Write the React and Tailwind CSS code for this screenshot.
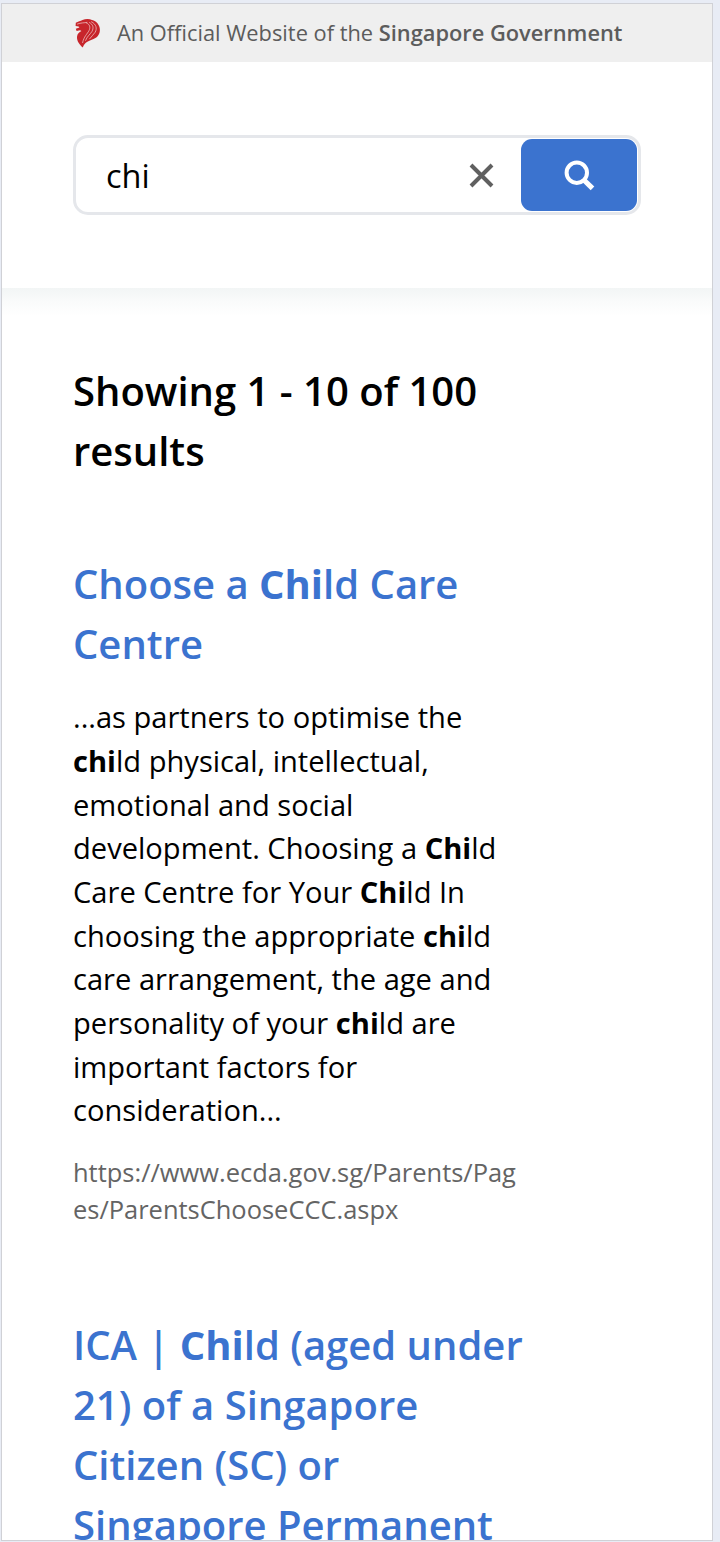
import React from "react";

function Lion() {
  return (
    <svg className="h-[30px] w-[26px] shrink-0" viewBox="0 0 26 30" aria-hidden="true">
      <path
        fill="#c7252b"
        d="M.8 4.8 C3 3.4 5.5 3 7.5 2 C10.5 .6 14.5 .6 17 2 C21.5 3.2 24.9 7 24.9 11.8 C24.9 16 22.8 19.4 18.5 21 C13.5 22.8 9.6 24.6 7.8 29.4 C4.6 27 1.8 23 2 19 C2.2 15.8 4.2 14 6.4 13 L5.1 12.2 L1.6 12.9 L.8 10.8 L4.4 9.4 L3.6 8.6 L.6 8 Z"
      />
      <g fill="none" stroke="#edc4c4" strokeWidth=".75" strokeLinecap="round">
        <path d="M2.5 6 C6 4.6 9 5 12 4.4" />
        <path d="M11.5 5 C15 6.4 15.6 9.4 14 12.6 C12.4 15.8 8.8 18.6 7.6 24.6" />
        <path d="M14.5 4.6 C18.4 6.6 18.8 10 17 13.4 C15 16.6 12 18.4 10.6 22.4" />
        <path d="M16.5 3.8 C21.4 6.2 22.2 10.6 20.2 14.2 C18.6 17 16 18.4 14.6 20.8" />
      </g>
    </svg>
  );
}

function Lines({ items }) {
  return items.map((line, i) => (
    <span key={i} className="block whitespace-nowrap">
      {line}
    </span>
  ));
}

const B = ({ children }) => <b className="font-bold">{children}</b>;

export default function App() {
  return (
    <div className="h-[1542px] w-[720px] overflow-hidden bg-[#e8ecf5] pl-px pt-[3px] font-['Open_Sans',sans-serif]">
      <main className="flex h-[1538px] w-[712px] flex-col overflow-hidden border border-[#d0d1d6] bg-white">
        <div className="flex h-[58px] shrink-0 items-center bg-[#efefef] pl-[73px] text-[#5c5c5c]">
          <Lion />
          <p className="ml-4 whitespace-nowrap text-[21.82px] leading-[32px]">
            An Official Website of the <b className="font-semibold">Singapore Government</b>
          </p>
        </div>

        <header className="flex h-[226px] shrink-0 items-start pl-[71px] pt-[73px]">
          <form className="flex h-20 w-[568px] rounded-[15px] border-[3px] border-[#e5e7eb] bg-white p-[0.6px]">
            <div className="flex flex-1 items-center justify-between pl-[29.4px] pr-[27.5px]">
              <span className="pt-0.5 text-[32.5px] text-black">chi</span>
              <svg className="size-[25px]" viewBox="0 0 25 25" fill="none" stroke="#606060" strokeWidth="4">
                <path d="M2 2 L23 23 M23 2 L2 23" />
              </svg>
            </div>
            <button type="button" aria-label="Search" className="flex w-[116.4px] items-center justify-center rounded-[11px] bg-[#3b73cf]">
              <svg className="h-[31px] w-[31px]" viewBox="0 0 31 31" fill="none" stroke="white">
                <circle cx="12.8" cy="12.7" r="10.2" strokeWidth="4" />
                <path d="M19.9 20 L28.5 28.3" strokeWidth="5.2" />
              </svg>
            </button>
          </form>
        </header>

        <section className="flex-1 bg-[linear-gradient(to_bottom,#f2f5f5_0px,#fafbfb_14px,#ffffff_28px)] pl-[71px] pt-[73px]">
          <h1 className="text-[40px] font-semibold leading-[60px] text-black">
            <Lines items={["Showing 1 - 10 of 100", "results"]} />
          </h1>

          <article className="mt-[73px]">
            <h2 className="text-[40px] font-semibold leading-[60px] text-[#3b73cf]">
              <Lines items={[<>Choose a <B>Chi</B>ld Care</>, "Centre"]} />
            </h2>
            <p className="mt-[22.4px] text-[29.1px] leading-[43.65px] text-black">
              <Lines
                items={[
                  "...as partners to optimise the",
                  <><B>chi</B>ld physical, intellectual,</>,
                  "emotional and social",
                  <>development. Choosing a <B>Chi</B>ld</>,
                  <>Care Centre for Your <B>Chi</B>ld In</>,
                  <>choosing the appropriate <B>chi</B>ld</>,
                  "care arrangement, the age and",
                  <>personality of your <B>chi</B>ld are</>,
                  "important factors for",
                  "consideration...",
                ]}
              />
            </p>
            <p className="mt-[21px] text-[25.46px] leading-[37px] text-[#646464]">
              <Lines items={["https://www.ecda.gov.sg/Parents/Pag", "es/ParentsChooseCCC.aspx"]} />
            </p>
          </article>

          <article className="mt-[87px]">
            <h2 className="text-[40px] font-semibold leading-[60px] text-[#3b73cf]">
              <Lines
                items={[
                  <>ICA | <B>Chi</B>ld (aged under</>,
                  "21) of a Singapore",
                  "Citizen (SC) or",
                  "Singapore Permanent",
                ]}
              />
            </h2>
          </article>
        </section>
      </main>
    </div>
  );
}
